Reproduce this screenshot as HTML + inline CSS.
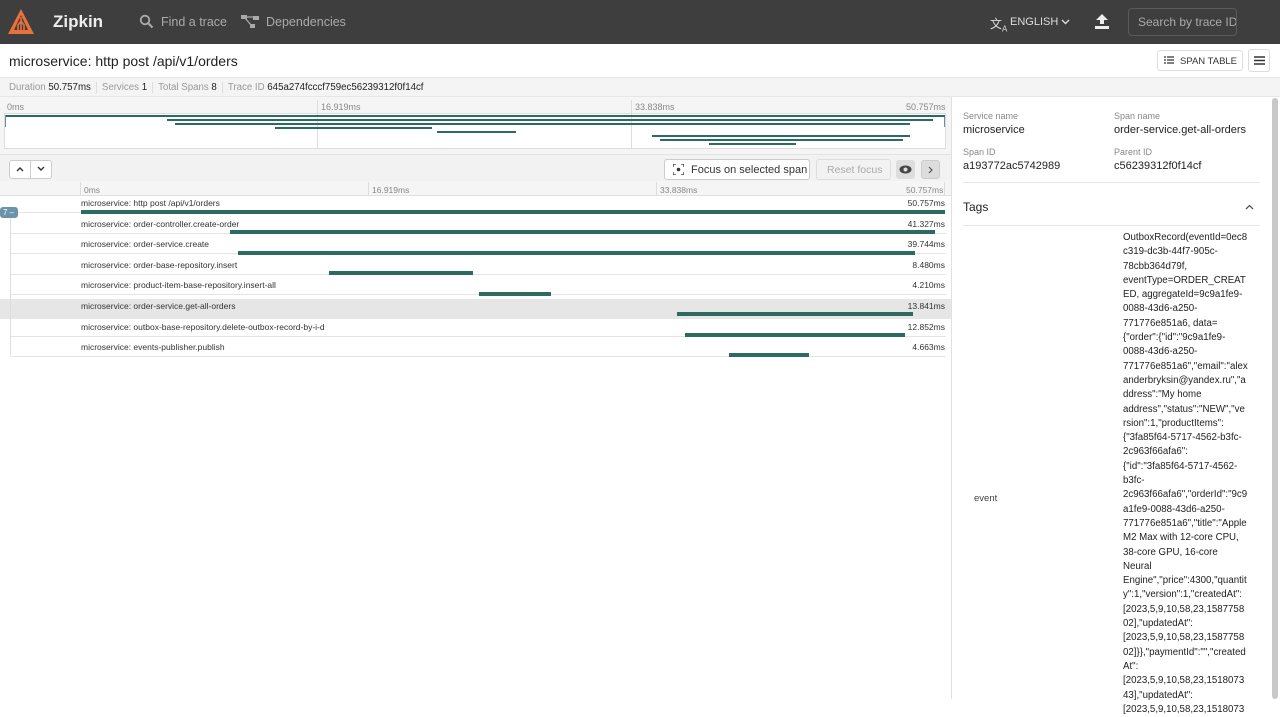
<!DOCTYPE html>
<html><head><meta charset="utf-8"><style>
*{box-sizing:border-box;margin:0;padding:0}
body{width:1280px;height:699px;overflow:hidden;font-family:"Liberation Sans",Arial,sans-serif;background:#fff;color:#333;position:relative}
.abs{position:absolute}
.hdr{left:0;top:0;width:1280px;height:44px;background:#3e3e3e}
.bar{position:absolute;height:4px;background:#2c6b60}
.mm{position:absolute;height:2px;background:#2c6b60}
.row{position:absolute;left:10px;width:941px;height:21px}
.row .n{position:absolute;left:71px;top:2px;font-size:8.5px;color:#333}
.row .d{position:absolute;right:6px;top:2px;font-size:8.5px;color:#333}
.row .ln{position:absolute;left:0;right:5px;top:16px;height:1px;background:#e4e4e4}
.lbl{font-size:9px;color:#888}
.val{font-size:11px;color:#222}
</style></head><body>
<div class="abs hdr"></div>
<svg class="abs" style="left:7px;top:8px" width="28" height="28" viewBox="0 0 28 28"><path d="M14 1 L27 26 L1 26 Z" fill="#e8713c"/><path d="M14 7 L21 22 L7 22 Z" fill="#3e3e3e"/><path d="M14 9 V24 M14 13 L11 17 V22 M14 13 L17 17 V22" stroke="#e8713c" stroke-width="1.6" fill="none"/></svg>
<div class="abs" style="left:53px;top:12px;color:#eee;font-size:17px;font-weight:bold">Zipkin</div>
<svg class="abs" style="left:139px;top:14px" width="15" height="15" viewBox="0 0 15 15"><circle cx="6" cy="6" r="4.3" stroke="#aaa" stroke-width="1.8" fill="none"/><path d="M9 9 L13.5 13.5" stroke="#aaa" stroke-width="2"/></svg>
<div class="abs" style="left:161px;top:15px;color:#aaa;font-size:12.5px">Find a trace</div>
<svg class="abs" style="left:241px;top:15px" width="18" height="13" viewBox="0 0 18 13"><rect x="0" y="0" width="6" height="4" fill="#aaa"/><rect x="12" y="1" width="6" height="4" fill="#aaa"/><rect x="9" y="9" width="5" height="4" fill="#aaa"/><path d="M5 2 H13 M4 3 L10 10" stroke="#aaa" stroke-width="1.3"/></svg>
<div class="abs" style="left:266px;top:15px;color:#aaa;font-size:12.5px">Dependencies</div>
<div class="abs" style="left:990px;top:15px;color:#ddd;font-size:12px">文<sub style="font-size:8px">A</sub></div>
<div class="abs" style="left:1010px;top:16px;color:#ddd;font-size:11px">ENGLISH</div>
<svg class="abs" style="left:1061px;top:19px" width="9" height="6"><path d="M1 1 L4.5 4.5 L8 1" stroke="#ddd" stroke-width="1.4" fill="none"/></svg>
<svg class="abs" style="left:1094px;top:13px" width="16" height="17" viewBox="0 0 16 17"><path d="M8 1 L14 7 H10 V11 H6 V7 H2 Z" fill="#eee"/><rect x="1" y="13" width="14" height="3" fill="#eee"/></svg>
<div class="abs" style="left:1128px;top:8px;width:109px;height:28px;border:1px solid #5a5a5a;border-radius:4px;color:#aaa;font-size:12px;padding:6px 9px;white-space:nowrap;overflow:hidden">Search by trace ID</div>

<div class="abs" style="left:9px;top:53px;font-size:14px;color:#222">microservice: http post /api/v1/orders</div>
<div class="abs" style="left:1157px;top:50px;width:86px;height:21px;border:1px solid #ddd;border-radius:3px;font-size:9.5px;color:#333;padding:5px 0 0 22px">SPAN TABLE</div>
<svg class="abs" style="left:1164px;top:56px" width="10" height="8"><path d="M0 1h2M3 1h7M0 4h2M3 4h7M0 7h2M3 7h7" stroke="#333" stroke-width="1.2"/></svg>
<div class="abs" style="left:1248px;top:49px;width:22px;height:23px;border:1px solid #ddd;border-radius:3px"></div>
<svg class="abs" style="left:1254px;top:56px" width="11" height="9"><path d="M0 1h11M0 4.5h11M0 8h11" stroke="#333" stroke-width="1.4"/></svg>

<div class="abs" style="left:0;top:77px;width:1280px;height:20px;background:#f4f4f4;border-top:1px solid #e6e6e6;border-bottom:1px solid #e6e6e6;font-size:9.7px;color:#999;padding-top:4px;white-space:nowrap">
<span style="margin-left:9px">Duration <span style="color:#222">50.757ms</span></span><span style="border-left:1px solid #ddd;margin-left:5px;padding-left:5px">Services <span style="color:#222">1</span></span><span style="border-left:1px solid #ddd;margin-left:5px;padding-left:5px">Total Spans <span style="color:#222">8</span></span><span style="border-left:1px solid #ddd;margin-left:5px;padding-left:5px">Trace ID <span style="color:#222">645a274fcccf759ec56239312f0f14cf</span></span></div>

<div class="abs" style="left:0;top:97px;width:951px;height:57px;background:#f5f5f5"></div>
<div class="abs" style="left:4px;top:113px;width:942px;height:36px;background:#fff;border:1px solid #ddd"></div>
<div class="abs lbl" style="left:7px;top:102px">0ms</div>
<div class="abs lbl" style="left:321px;top:102px">16.919ms</div>
<div class="abs lbl" style="left:635px;top:102px">33.838ms</div>
<div class="abs lbl" style="left:906px;top:102px">50.757ms</div>
<div class="abs" style="left:317px;top:100px;width:1px;height:49px;background:#ddd"></div>
<div class="abs" style="left:631px;top:100px;width:1px;height:49px;background:#ddd"></div>
<div class="abs" style="left:5px;top:115px;width:1px;height:12px;background:#6b8fa6"></div>
<div class="abs" style="left:944px;top:115px;width:1px;height:12px;background:#6b8fa6"></div>
<div class="mm" style="left:6px;top:115px;width:939px"></div>
<div class="mm" style="left:167px;top:119px;width:766px"></div>
<div class="mm" style="left:175px;top:123px;width:735px"></div>
<div class="mm" style="left:275px;top:127px;width:157px"></div>
<div class="mm" style="left:437px;top:131px;width:79px"></div>
<div class="mm" style="left:652px;top:135px;width:258px"></div>
<div class="mm" style="left:660px;top:139px;width:243px"></div>
<div class="mm" style="left:709px;top:143px;width:87px"></div>

<div class="abs" style="left:0;top:154px;width:951px;height:27px;background:#f2f2f2;border-top:1px solid #e4e4e4"></div>
<div class="abs" style="left:9px;top:160px;width:43px;height:19px;border:1px solid #ccc;border-radius:3px;background:#fff"></div>
<div class="abs" style="left:30px;top:160px;width:1px;height:19px;background:#ccc"></div>
<svg class="abs" style="left:16px;top:166px" width="30" height="6"><path d="M1 5 L4 2 L7 5" stroke="#333" stroke-width="1.4" fill="none"/><path d="M22 1 L25 4 L28 1" stroke="#333" stroke-width="1.4" fill="none"/></svg>
<div class="abs" style="left:664px;top:159px;width:146px;height:21px;border:1px solid #ccc;border-radius:3px;background:#fff;font-size:11px;color:#333;padding:4px 0 0 26px;white-space:nowrap">Focus on selected span</div>
<svg class="abs" style="left:673px;top:164px" width="11" height="11"><path d="M0 3V0H3M8 0H11V3M11 8V11H8M3 11H0V8" stroke="#333" stroke-width="1.3" fill="none"/><circle cx="5.5" cy="5.5" r="1.8" fill="#333"/></svg>
<div class="abs" style="left:816px;top:159px;width:75px;height:21px;border:1px solid #ddd;border-radius:3px;font-size:10.5px;color:#aaa;padding:4px 0 0 10px">Reset focus</div>
<div class="abs" style="left:896px;top:160px;width:19px;height:19px;border-radius:3px;background:#ddd"></div>
<svg class="abs" style="left:899px;top:165px" width="13" height="9"><ellipse cx="6.5" cy="4.5" rx="6" ry="4" fill="#444"/><circle cx="6.5" cy="4.5" r="2" fill="#ddd"/></svg>
<div class="abs" style="left:921px;top:160px;width:19px;height:19px;border-radius:3px;background:#ddd;border:1px solid #ccc"></div>
<svg class="abs" style="left:928px;top:166px" width="5" height="8"><path d="M1 1L4 4L1 7" stroke="#555" stroke-width="1.2" fill="none"/></svg>

<div class="abs" style="left:0;top:181px;width:951px;height:15px;background:#f5f5f5;border-bottom:1px solid #e0e0e0"></div>
<div class="abs" style="left:80px;top:182px;width:1px;height:14px;background:#ddd"></div>
<div class="abs" style="left:368px;top:182px;width:1px;height:14px;background:#ddd"></div>
<div class="abs" style="left:656px;top:182px;width:1px;height:14px;background:#ddd"></div>
<div class="abs" style="left:944px;top:182px;width:1px;height:14px;background:#ddd"></div>
<div class="abs lbl" style="left:84px;top:185px;font-size:8.5px">0ms</div>
<div class="abs lbl" style="left:372px;top:185px;font-size:8.5px">16.919ms</div>
<div class="abs lbl" style="left:660px;top:185px;font-size:8.5px">33.838ms</div>
<div class="abs lbl" style="left:906px;top:185px;font-size:8.5px">50.757ms</div>

<div class="abs" style="left:0;top:299px;width:951px;height:20px;background:#e6e6e6"></div>
<div class="row" style="top:196px"><div class="ln"></div><div class="n">microservice: http post /api/v1/orders</div><div class="d">50.757ms</div></div>
<div class="row" style="top:216.6px"><div class="ln"></div><div class="n">microservice: order-controller.create-order</div><div class="d">41.327ms</div></div>
<div class="row" style="top:237.2px"><div class="ln"></div><div class="n">microservice: order-service.create</div><div class="d">39.744ms</div></div>
<div class="row" style="top:257.8px"><div class="ln"></div><div class="n">microservice: order-base-repository.insert</div><div class="d">8.480ms</div></div>
<div class="row" style="top:278.4px"><div class="ln"></div><div class="n">microservice: product-item-base-repository.insert-all</div><div class="d">4.210ms</div></div>
<div class="row" style="top:299px"><div class="ln"></div><div class="n">microservice: order-service.get-all-orders</div><div class="d">13.841ms</div></div>
<div class="row" style="top:319.6px"><div class="ln"></div><div class="n">microservice: outbox-base-repository.delete-outbox-record-by-i-d</div><div class="d">12.852ms</div></div>
<div class="row" style="top:340.2px"><div class="ln"></div><div class="n">microservice: events-publisher.publish</div><div class="d">4.663ms</div></div>
<div class="abs" style="left:10px;top:212px;width:1px;height:143px;background:#ddd"></div>
<div class="bar" style="left:81px;top:210px;width:864px"></div>
<div class="bar" style="left:230px;top:230px;width:705px"></div>
<div class="bar" style="left:238px;top:251px;width:677px"></div>
<div class="bar" style="left:329px;top:271px;width:144px"></div>
<div class="bar" style="left:479px;top:292px;width:72px"></div>
<div class="bar" style="left:677px;top:312px;width:236px"></div>
<div class="bar" style="left:685px;top:333px;width:220px"></div>
<div class="bar" style="left:729px;top:353px;width:80px"></div>
<div class="abs" style="left:0;top:207px;width:18px;height:11px;background:#6d93ab;border-radius:3px;color:#fff;font-size:8px;padding:1px 0 0 3px">7 –</div>

<div class="abs" style="left:951px;top:97px;width:329px;height:602px;background:#fff;border-left:1px solid #e0e0e0"></div>
<div class="abs" style="left:1272px;top:98px;width:6px;height:601px;background:#c8c8c8;border-radius:3px"></div>
<div class="abs lbl" style="left:963px;top:111px">Service name</div>
<div class="abs val" style="left:963px;top:124px">microservice</div>
<div class="abs lbl" style="left:1114px;top:111px">Span name</div>
<div class="abs val" style="left:1114px;top:124px">order-service.get-all-orders</div>
<div class="abs lbl" style="left:963px;top:147px">Span ID</div>
<div class="abs val" style="left:963px;top:160px">a193772ac5742989</div>
<div class="abs lbl" style="left:1114px;top:147px">Parent ID</div>
<div class="abs val" style="left:1114px;top:160px">c56239312f0f14cf</div>
<div class="abs" style="left:963px;top:182px;width:297px;height:1px;background:#e6e6e6"></div>
<div class="abs" style="left:963px;top:200px;font-size:12px;color:#222">Tags</div>
<svg class="abs" style="left:1245px;top:204px" width="9" height="6"><path d="M1 5L4.5 1.5L8 5" stroke="#555" stroke-width="1.3" fill="none"/></svg>
<div class="abs" style="left:963px;top:225px;width:297px;height:1px;background:#e6e6e6"></div>
<div class="abs" style="left:974px;top:493px;font-size:9.5px;color:#444">event</div>
<div class="abs" style="left:1123px;top:231px;font-size:9.7px;line-height:14.3px;color:#222;white-space:nowrap">OutboxRecord(eventId=0ec8<br>c319-dc3b-44f7-905c-<br>78cbb364d79f,<br>eventType=ORDER_CREAT<br>ED, aggregateId=9c9a1fe9-<br>0088-43d6-a250-<br>771776e851a6, data=<br>{"order":{"id":"9c9a1fe9-<br>0088-43d6-a250-<br>771776e851a6","email":"alex<br>anderbryksin@yandex.ru","a<br>ddress":"My home<br>address","status":"NEW","ve<br>rsion":1,"productItems":<br>{"3fa85f64-5717-4562-b3fc-<br>2c963f66afa6":<br>{"id":"3fa85f64-5717-4562-<br>b3fc-<br>2c963f66afa6","orderId":"9c9<br>a1fe9-0088-43d6-a250-<br>771776e851a6","title":"Apple<br>M2 Max with 12-core CPU,<br>38-core GPU, 16-core<br>Neural<br>Engine","price":4300,"quantit<br>y":1,"version":1,"createdAt":<br>[2023,5,9,10,58,23,1587758<br>02],"updatedAt":<br>[2023,5,9,10,58,23,1587758<br>02]}},"paymentId":"","created<br>At":<br>[2023,5,9,10,58,23,1518073<br>43],"updatedAt":<br>[2023,5,9,10,58,23,1518073</div>
</body></html>
